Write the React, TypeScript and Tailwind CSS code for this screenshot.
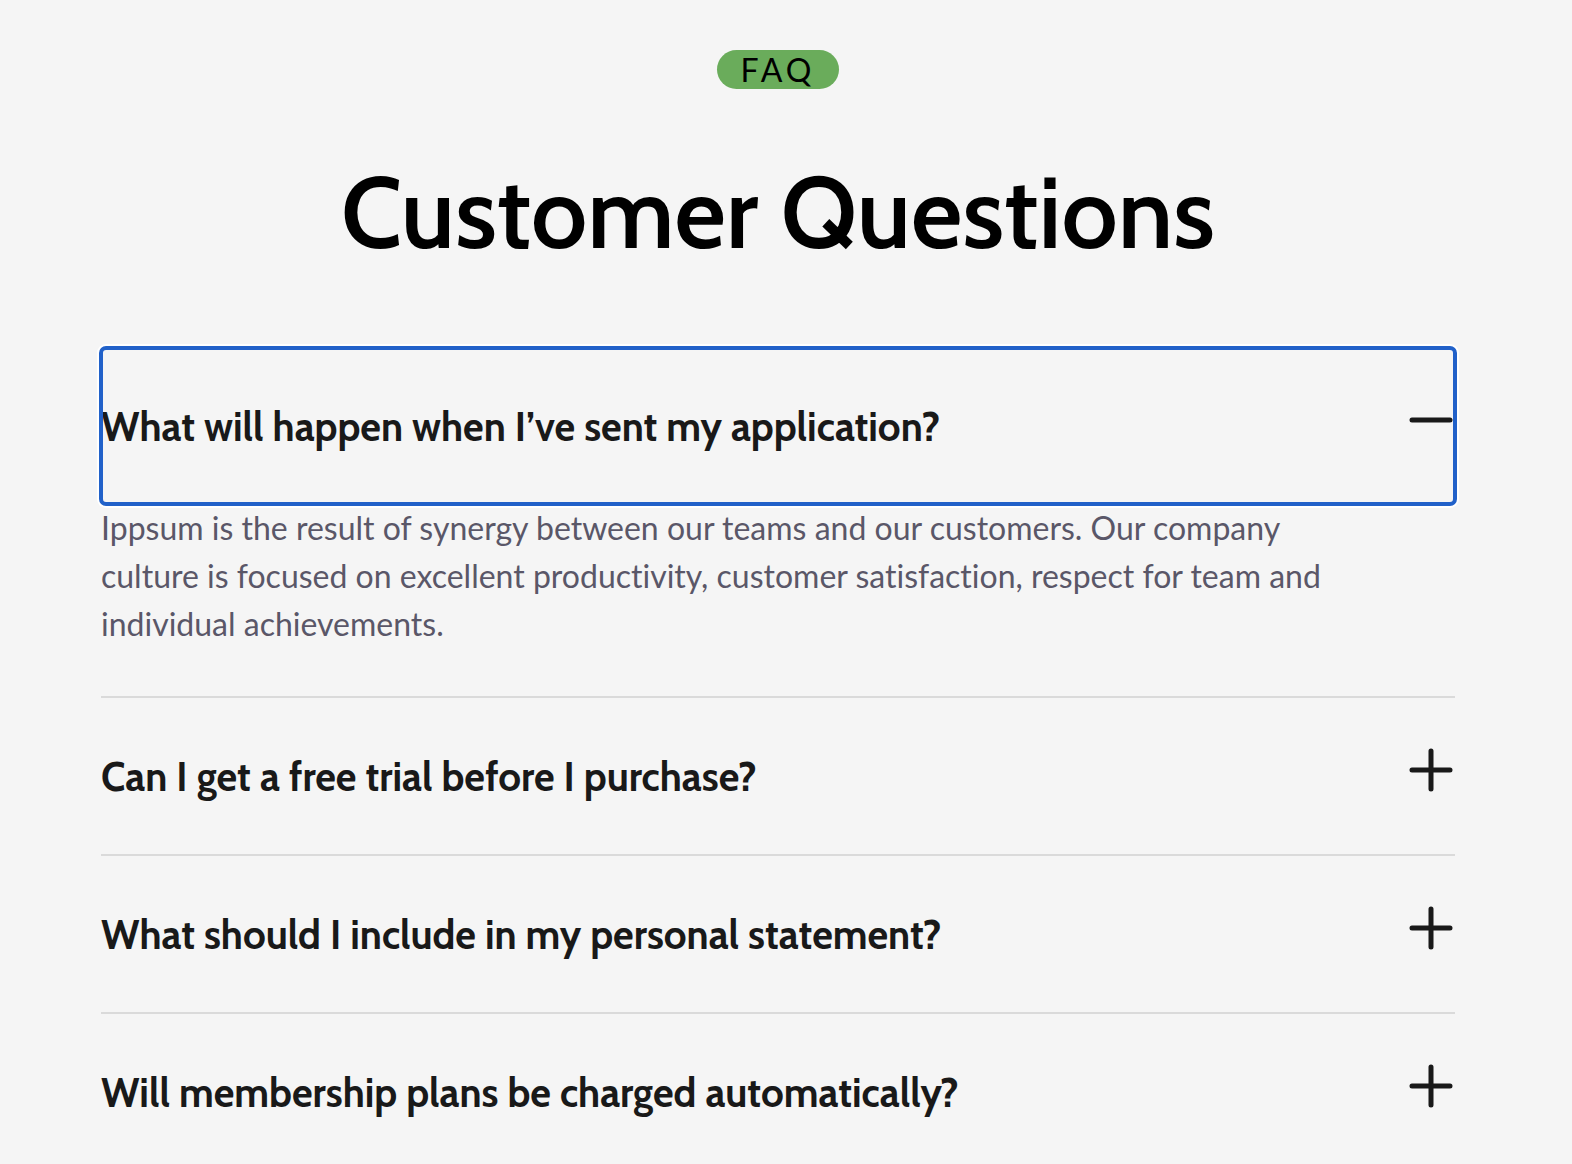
import { useState } from "react";

const faqs = [
  {
    question: "What will happen when I’ve sent my application?",
    answer:
      "Ippsum is the result of synergy between our teams and our customers. Our company culture is focused on excellent productivity, customer satisfaction, respect for team and individual achievements.",
  },
  { question: "Can I get a free trial before I purchase?", answer: "" },
  { question: "What should I include in my personal statement?", answer: "" },
  { question: "Will membership plans be charged automatically?", answer: "" },
];

function ToggleIcon({ open }: { open: boolean }) {
  return (
    <svg
      className="size-12 shrink-0"
      viewBox="0 0 48 48"
      fill="none"
      stroke="currentColor"
      strokeWidth="5"
      strokeLinecap="round"
      aria-hidden="true"
    >
      <path d={open ? "M5 24H43" : "M5 24H43M24 5V43"} />
    </svg>
  );
}

export default function App() {
  const [openIndex, setOpenIndex] = useState(0);

  return (
    <main className="min-h-screen bg-[#f5f5f5] pt-[50px] pr-[117px] pl-[101px] font-['Lato',sans-serif]">
      <header className="flex flex-col items-center">
        <p className="rounded-full bg-[#6aac5b] px-6 text-[32px] leading-[39px] tracking-[4px] text-black">FAQ</p>
        <h1 className="mt-[63px] text-center font-['Cabin','Lato',sans-serif] text-[100px] leading-[120px] font-semibold text-black">
          Customer Questions
        </h1>
      </header>

      <section className="mt-[76px]">
        {faqs.map(({ question, answer }, i) => {
          const open = i === openIndex;
          return (
            <article key={question} className="border-b-2 border-[#dadada]">
              <h2>
                <button
                  type="button"
                  aria-expanded={open}
                  onClick={() => setOpenIndex(open ? -1 : i)}
                  className={
                    "flex w-full items-start justify-between gap-6 pt-12 pb-[46px] text-left font-['Cabin','Lato',sans-serif] text-[40px] leading-[62px] font-bold text-[#191919] " +
                    (open
                      ? "rounded-[5px] outline-4 -outline-offset-2 outline-[#2161c9] shadow-[0_0_0_4px_#ffffff]"
                      : "outline-none")
                  }
                >
                  <span>{question}</span>
                  <ToggleIcon open={open} />
                </button>
              </h2>
              {open && answer && (
                <p className="pr-24 pb-12 text-[32px] leading-[48px] text-[#5a5768] [font-variant-ligatures:none]">
                  {answer}
                </p>
              )}
            </article>
          );
        })}
      </section>
    </main>
  );
}
